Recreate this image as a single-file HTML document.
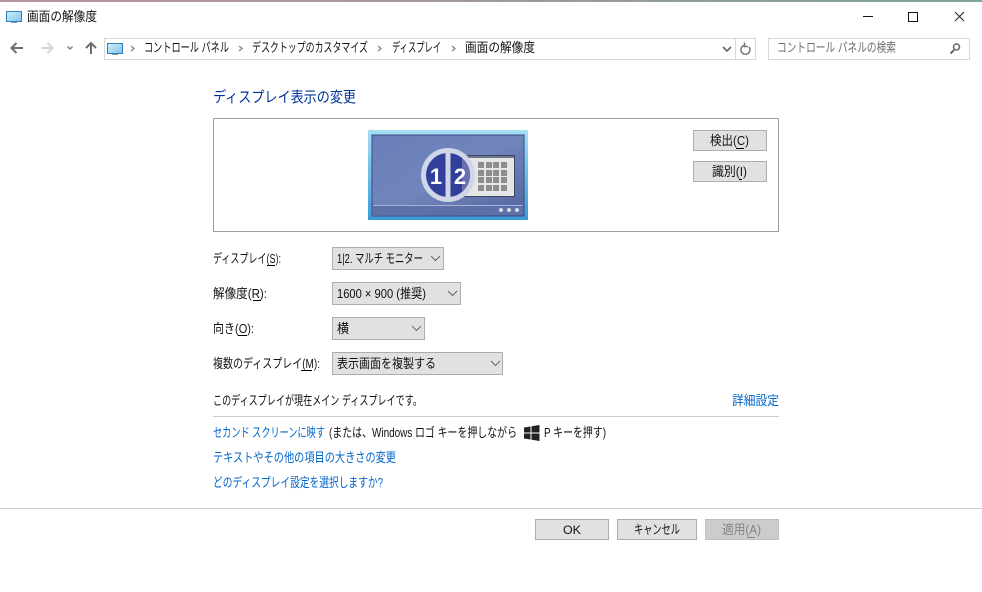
<!DOCTYPE html>
<html lang="ja"><head><meta charset="utf-8"><title>画面の解像度</title>
<style>
html,body{margin:0;padding:0;background:#fff;width:982px;height:592px;overflow:hidden}
svg{display:block}
text{font-family:"Liberation Sans","Noto Sans CJK JP",sans-serif;font-size:13px;fill:#111;white-space:pre}
.l{fill:#0066cc}
</style></head><body>
<svg width="982" height="592" viewBox="0 0 982 592" xmlns="http://www.w3.org/2000/svg" shape-rendering="crispEdges">
<defs>
<linearGradient id="top" x1="0" x2="1" y1="0" y2="0"><stop offset="0" stop-color="#b98fa0"/><stop offset=".5" stop-color="#a0999f"/><stop offset="1" stop-color="#7fa89f"/></linearGradient>
<linearGradient id="fr" x1="0" x2="0" y1="0" y2="1"><stop offset="0" stop-color="#a5def5"/><stop offset="1" stop-color="#3a9ad6"/></linearGradient>
<linearGradient id="sc" x1="0" x2="1" y1="0" y2="1"><stop offset="0" stop-color="#6a7fb8"/><stop offset=".5" stop-color="#7085bb"/><stop offset="1" stop-color="#55659f"/></linearGradient>
<linearGradient id="ic" x1="0" x2="1" y1="0" y2="1"><stop offset="0" stop-color="#d5effc"/><stop offset="1" stop-color="#7cc3ee"/></linearGradient>
</defs>
<rect x="0" y="0" width="982" height="2" fill="url(#top)"/>

<!-- title icon -->
<rect x="6.5" y="11.5" width="15" height="10" fill="url(#ic)" stroke="#2d7fb5"/>
<rect x="11" y="22" width="6" height="1" fill="#8a9aa8"/>
<text x="27" y="21" textLength="70" lengthAdjust="spacingAndGlyphs">画面の解像度</text>

<!-- window controls -->
<rect x="863" y="16" width="10" height="1" fill="#111"/>
<rect x="908.5" y="12.5" width="9" height="9" fill="none" stroke="#111"/>
<path d="M955 12L964 21M964 12L955 21" stroke="#222" stroke-width="1" fill="none" shape-rendering="auto"/>

<!-- nav -->
<g shape-rendering="auto" fill="none">
<path d="M23 48H12M16.5 43L11.5 48L16.5 53" stroke="#6d6d6d" stroke-width="2"/>
<path d="M41 48H52M47.5 43L52.5 48L47.5 53" stroke="#d4d4d4" stroke-width="2"/>
<path d="M67.5 46.5L70 49L72.5 46.5" stroke="#808080" stroke-width="1.5"/>
<path d="M91 54V43M86 48L91 43L96 48" stroke="#6d6d6d" stroke-width="2"/>
</g>

<!-- address bar -->
<rect x="104.5" y="38.5" width="651" height="21" fill="#fff" stroke="#d9d9d9"/>
<rect x="735" y="39" width="1" height="20" fill="#d9d9d9"/>
<rect x="107.5" y="43.5" width="15" height="10" fill="url(#ic)" stroke="#2d7fb5"/>
<rect x="112" y="54" width="6" height="1" fill="#8a9aa8"/>
<g shape-rendering="auto" fill="none" stroke="#8a8a8a" stroke-width="1.4">
<path d="M131 46L134 48.5L131 51"/>
<path d="M239 46L242 48.5L239 51"/>
<path d="M378 46L381 48.5L378 51"/>
<path d="M452 46L455 48.5L452 51"/>
</g>
<text x="144" y="52" textLength="85" lengthAdjust="spacingAndGlyphs">コントロール パネル</text>
<text x="252" y="52" textLength="116" lengthAdjust="spacingAndGlyphs">デスクトップのカスタマイズ</text>
<text x="392" y="52" textLength="49" lengthAdjust="spacingAndGlyphs">ディスプレイ</text>
<text x="465" y="52" textLength="70" lengthAdjust="spacingAndGlyphs">画面の解像度</text>
<path d="M723 47L727 51L731 47" stroke="#666" stroke-width="1.6" fill="none" shape-rendering="auto"/>
<path d="M744 45.5A4.5 4.5 0 1 0 749 47M744.5 42.5V46.5H748" stroke="#777" stroke-width="1.5" fill="none" shape-rendering="auto"/>

<!-- search -->
<rect x="768.5" y="38.5" width="201" height="21" fill="#fff" stroke="#d9d9d9"/>
<text x="777" y="52" textLength="119" lengthAdjust="spacingAndGlyphs" style="fill:#6d6d6d">コントロール パネルの検索</text>
<g shape-rendering="auto" fill="none" stroke="#666"><circle cx="956.5" cy="47" r="3" stroke-width="1.5"/><path d="M954 50L950.5 53.5" stroke-width="2"/></g>

<!-- heading -->
<text x="213" y="102" textLength="143" lengthAdjust="spacingAndGlyphs" style="font-size:15px;fill:#003399">ディスプレイ表示の変更</text>

<!-- preview box -->
<rect x="213.5" y="118.5" width="565" height="113" fill="#fff" stroke="#a0a0a0"/>

<!-- monitor -->
<rect x="368" y="130" width="160" height="90" fill="url(#fr)"/>
<rect x="372" y="135" width="152" height="81" fill="url(#sc)" stroke="#3c4a80"/>
<rect x="373" y="205" width="150" height="1" fill="#a5b4d6"/>
<rect x="373" y="206" width="150" height="9" fill="#5e70a8"/>
<g shape-rendering="auto">
<circle cx="501" cy="210" r="2" fill="#d8dfee"/><circle cx="509" cy="210" r="2" fill="#d8dfee"/><circle cx="517" cy="210" r="2" fill="#d8dfee"/>
<rect x="462" y="155" width="53" height="42" fill="#3e4466"/>
<rect x="462" y="156" width="52" height="40" fill="#e6e6e6"/>
<rect x="462" y="156" width="52" height="2" fill="#6a7590"/>
</g>
<g fill="#8e8e8e">
<rect x="478" y="162" width="6" height="6"/><rect x="486" y="162" width="6" height="6"/><rect x="493" y="162" width="6" height="6"/><rect x="501" y="162" width="6" height="6"/>
<rect x="478" y="170" width="6" height="6"/><rect x="486" y="170" width="6" height="6"/><rect x="493" y="170" width="6" height="6"/><rect x="501" y="170" width="6" height="6"/>
<rect x="478" y="177" width="6" height="6"/><rect x="486" y="177" width="6" height="6"/><rect x="493" y="177" width="6" height="6"/><rect x="501" y="177" width="6" height="6"/>
<rect x="478" y="185" width="6" height="6"/><rect x="486" y="185" width="6" height="6"/><rect x="493" y="185" width="6" height="6"/><rect x="501" y="185" width="6" height="6"/>
</g>
<g shape-rendering="auto">
<circle cx="448" cy="175" r="27" fill="#cfd6e8"/>
<circle cx="448" cy="175" r="22" fill="#33409a"/>
<rect x="445.5" y="150" width="5" height="50" fill="#cfd6e8"/>
<path d="M462 158A22 22 0 0 1 462 192Z" fill="#6a6fb0"/>
<text x="436" y="184" text-anchor="middle" style="font-size:22px;font-weight:bold;fill:#fff">1</text>
<text x="460" y="184" text-anchor="middle" style="font-size:22px;font-weight:bold;fill:#fff">2</text>
</g>

<!-- side buttons -->
<rect x="693.5" y="130.5" width="73" height="20" fill="#e1e1e1" stroke="#adadad"/>
<text x="710" y="145" textLength="39" lengthAdjust="spacingAndGlyphs">検出(C)</text>
<rect x="736" y="148" width="8" height="1" fill="#000"/>
<rect x="693.5" y="161.5" width="73" height="20" fill="#e1e1e1" stroke="#adadad"/>
<text x="712" y="176" textLength="35" lengthAdjust="spacingAndGlyphs">識別(I)</text>
<rect x="739" y="179" width="3" height="1" fill="#000"/>

<!-- labels -->
<text x="213" y="263" textLength="68" lengthAdjust="spacingAndGlyphs">ディスプレイ(S):</text>
<rect x="267" y="265" width="8" height="1" fill="#000"/>
<text x="213" y="298" textLength="54" lengthAdjust="spacingAndGlyphs">解像度(R):</text>
<rect x="253" y="300" width="8" height="1" fill="#000"/>
<text x="213" y="333" textLength="41" lengthAdjust="spacingAndGlyphs">向き(O):</text>
<rect x="238" y="335" width="9" height="1" fill="#000"/>
<text x="213" y="368" textLength="107" lengthAdjust="spacingAndGlyphs">複数のディスプレイ(M):</text>
<rect x="301" y="370" width="11" height="1" fill="#000"/>

<!-- selects -->
<rect x="332.5" y="247.5" width="111" height="22" fill="#e1e1e1" stroke="#adadad"/>
<text x="337" y="263" textLength="86" lengthAdjust="spacingAndGlyphs">1|2. マルチ モニター</text>
<rect x="332.5" y="282.5" width="128" height="22" fill="#e1e1e1" stroke="#adadad"/>
<text x="337" y="298" textLength="89" lengthAdjust="spacingAndGlyphs">1600 × 900 (推奨)</text>
<rect x="332.5" y="317.5" width="92" height="22" fill="#e1e1e1" stroke="#adadad"/>
<text x="337" y="333" textLength="12" lengthAdjust="spacingAndGlyphs">横</text>
<rect x="332.5" y="352.5" width="170" height="22" fill="#e1e1e1" stroke="#adadad"/>
<text x="337" y="368" textLength="99" lengthAdjust="spacingAndGlyphs">表示画面を複製する</text>
<g shape-rendering="auto" fill="none" stroke="#666" stroke-width="1">
<path d="M431 256L435.5 260.5L440 256"/>
<path d="M448 291L452.5 295.5L457 291"/>
<path d="M412 326L416.5 330.5L421 326"/>
<path d="M491 361L495.5 365.5L500 361"/>
</g>

<!-- status -->
<text x="213" y="405" textLength="209" lengthAdjust="spacingAndGlyphs">このディスプレイが現在メイン ディスプレイです。</text>
<text class="l" x="732" y="405" textLength="47" lengthAdjust="spacingAndGlyphs">詳細設定</text>
<rect x="213" y="416" width="566" height="1" fill="#cccccc"/>

<!-- links -->
<text class="l" x="213" y="437" textLength="112" lengthAdjust="spacingAndGlyphs">セカンド スクリーンに映す</text>
<text x="329" y="437" textLength="188" lengthAdjust="spacingAndGlyphs">(または、Windows ロゴ キーを押しながら</text>
<g shape-rendering="auto" fill="#222"><path d="M524 427.5L530.5 426.5V432.5H524ZM531.5 426.3L539.5 425V432.5H531.5ZM524 433.5H530.5V439.5L524 438.5ZM531.5 433.5H539.5V441L531.5 439.7Z"/></g>
<text x="544" y="437" textLength="62" lengthAdjust="spacingAndGlyphs">P キーを押す)</text>
<text class="l" x="213" y="462" textLength="183" lengthAdjust="spacingAndGlyphs">テキストやその他の項目の大きさの変更</text>
<text class="l" x="213" y="487" textLength="170" lengthAdjust="spacingAndGlyphs">どのディスプレイ設定を選択しますか?</text>

<!-- footer -->
<rect x="0" y="508" width="982" height="1" fill="#cccccc"/>
<rect x="535.5" y="519.5" width="73" height="20" fill="#e1e1e1" stroke="#adadad"/>
<text x="563" y="534" textLength="18" lengthAdjust="spacingAndGlyphs" style="font-size:12px">OK</text>
<rect x="617.5" y="519.5" width="79" height="20" fill="#e1e1e1" stroke="#adadad"/>
<text x="634" y="534" textLength="46" lengthAdjust="spacingAndGlyphs">キャンセル</text>
<rect x="705.5" y="519.5" width="73" height="20" fill="#cccccc" stroke="#bfbfbf"/>
<text x="722" y="534" textLength="39" lengthAdjust="spacingAndGlyphs" style="fill:#838383">適用(A)</text>
<rect x="747" y="537" width="8" height="1" fill="#838383"/>
</svg>
</body></html>
